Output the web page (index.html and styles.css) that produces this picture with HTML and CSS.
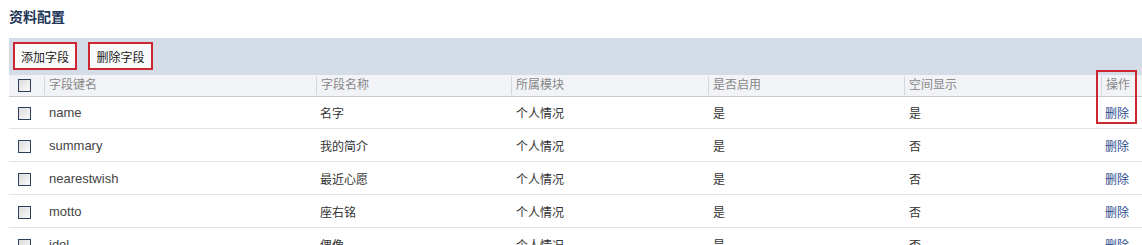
FILE: index.html
```html
<!DOCTYPE html>
<html lang="zh-CN">
<head>
    <meta charset="UTF-8">
    <title>资料配置</title>
    <link rel="stylesheet" href="styles.css">
</head>
<body>
    <div class="page">
        <h2 class="title">资料配置</h2>
        <div class="toolbar">
            <button class="btn">添加字段</button>
            <button class="btn">删除字段</button>
        </div>
        <div class="grid-wrap">
            <table class="grid">
                <colgroup>
                    <col class="c-check">
                    <col class="c-key">
                    <col class="c-name">
                    <col class="c-mod">
                    <col class="c-on">
                    <col class="c-space">
                    <col class="c-op">
                </colgroup>
                <thead>
                    <tr>
                        <th class="chk"><span class="box"></span></th>
                        <th><span class="sep">字段键名</span></th>
                        <th><span class="sep">字段名称</span></th>
                        <th><span class="sep">所属模块</span></th>
                        <th><span class="sep">是否启用</span></th>
                        <th><span class="sep">空间显示</span></th>
                        <th><span class="sep">操作</span></th>
                    </tr>
                </thead>
                <tbody>
                    <tr>
                        <td class="chk"><span class="box"></span></td>
                        <td>name</td><td>名字</td><td>个人情况</td><td>是</td><td>是</td>
                        <td><a href="#">删除</a></td>
                    </tr>
                    <tr>
                        <td class="chk"><span class="box"></span></td>
                        <td>summary</td><td>我的简介</td><td>个人情况</td><td>是</td><td>否</td>
                        <td><a href="#">删除</a></td>
                    </tr>
                    <tr>
                        <td class="chk"><span class="box"></span></td>
                        <td>nearestwish</td><td>最近心愿</td><td>个人情况</td><td>是</td><td>否</td>
                        <td><a href="#">删除</a></td>
                    </tr>
                    <tr>
                        <td class="chk"><span class="box"></span></td>
                        <td>motto</td><td>座右铭</td><td>个人情况</td><td>是</td><td>否</td>
                        <td><a href="#">删除</a></td>
                    </tr>
                    <tr>
                        <td class="chk"><span class="box"></span></td>
                        <td>idol</td><td>偶像</td><td>个人情况</td><td>是</td><td>否</td>
                        <td><a href="#">删除</a></td>
                    </tr>
                </tbody>
            </table>
            <div class="mark"></div>
        </div>
    </div>
</body>
</html>
```

FILE: styles.css
```css
body {
    margin: 0;
    padding: 0;
    background: #fff;
    font-family: "Liberation Sans", "Noto Sans CJK SC", sans-serif;
    font-size: 12px;
    color: #333;
    overflow: hidden;
}
.page {
    padding-left: 9px;
}
.title {
    margin: 0;
    height: 38px;
    padding-top: 8px;
    box-sizing: border-box;
    font-size: 14px;
    line-height: 18px;
    font-weight: bold;
    color: #1d3556;
}
.toolbar {
    display: flex;
    gap: 11px;
    height: 37px;
    padding: 4px 0 0 4px;
    box-sizing: border-box;
    background: #d4dce8;
}
.btn {
    height: 28px;
    padding: 0;
    border: 2px solid #cc2630;
    background: #fafafa;
    font-family: "Liberation Sans", "Noto Sans CJK SC", sans-serif;
    font-size: 12px;
    color: #222;
    white-space: nowrap;
    text-align: center;
}
.btn:first-child {
    width: 64px;
}
.btn:last-child {
    width: 65px;
}
.grid-wrap {
    position: relative;
}
.grid {
    border-collapse: collapse;
    table-layout: fixed;
    width: 1140px;
}
.c-check { width: 35px; }
.c-key { width: 272px; }
.c-name { width: 195px; }
.c-mod { width: 197px; }
.c-on { width: 196px; }
.c-space { width: 197px; }
.c-op { width: 48px; }
.grid th {
    height: 21px;
    padding: 0;
    background: #f1f3f7;
    border-bottom: 1px solid #c6cbd3;
    font-weight: normal;
    text-align: left;
    color: #888;
}
.grid th .sep {
    display: block;
    border-left: 1px solid #d3d7de;
    padding-left: 4px;
    line-height: 19px;
}
.grid td {
    height: 32px;
    padding: 0 0 0 5px;
    border-bottom: 1px solid #e2e4e8;
    color: #333;
}
.grid tbody tr:first-child td {
    height: 31px;
}
.grid td:nth-child(2) {
    font-size: 13px;
    color: #444;
}
.grid td:nth-child(3) {
    padding-left: 4px;
}
.grid .chk {
    padding: 0 0 0 9px;
}
.box {
    display: block;
    width: 11px;
    height: 11px;
    border: 1px solid #2b3f5e;
    background: linear-gradient(135deg, #dcdcdc, #fafafa);
}
.grid td.chk .box {
    margin-top: 2px;
}
.grid td:last-child {
    padding-left: 4px;
}
.grid a {
    color: #2e4d8e;
    text-decoration: none;
}
.mark {
    position: absolute;
    left: 1087px;
    top: -5px;
    width: 37px;
    height: 50px;
    border: 2px solid #cc2630;
}
```
